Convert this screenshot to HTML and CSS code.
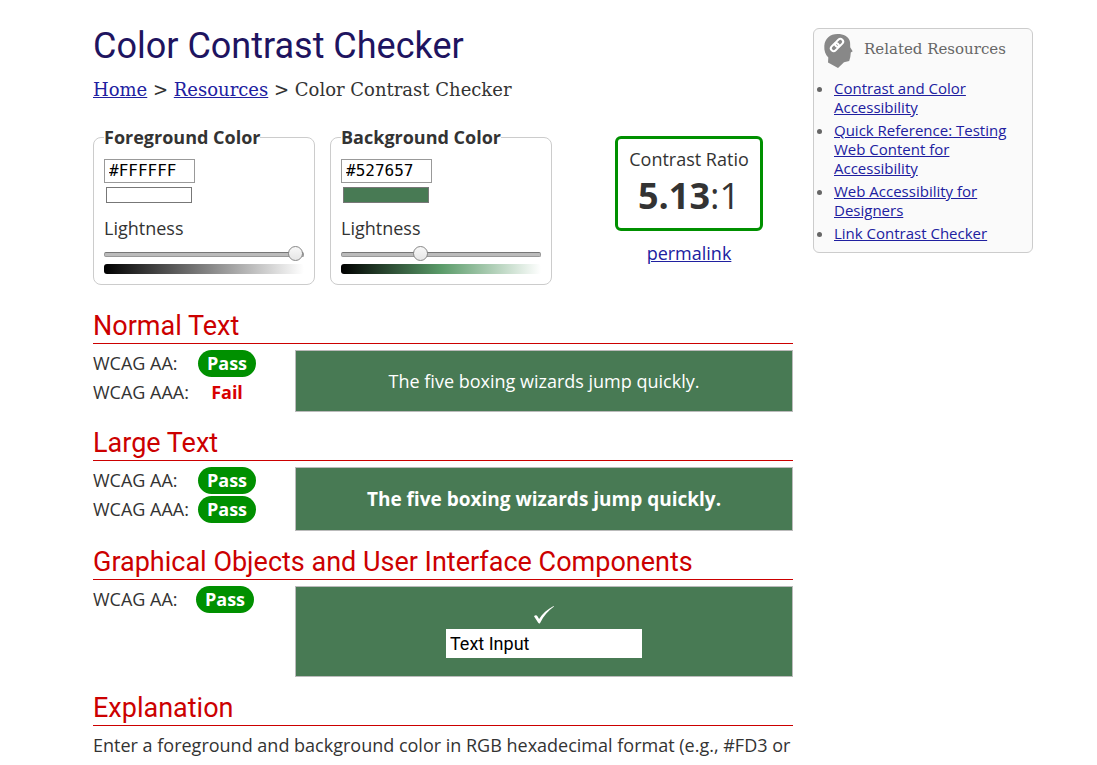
FILE: index.html
```html
<!DOCTYPE html>
<html lang="en">
<head>
<meta charset="utf-8">
<title>Color Contrast Checker</title>
<link rel="stylesheet" href="styles.css">
</head>
<body>
<div class="page">
  <main class="main">
    <h1 class="title">Color Contrast Checker</h1>
    <nav class="crumbs" aria-label="Breadcrumb"><a href="#">Home</a> &gt; <a href="#">Resources</a> &gt; Color Contrast Checker</nav>

    <form class="controls">
      <fieldset class="picker">
        <legend>Foreground Color</legend>
        <input class="hex" type="text" value="#FFFFFF" aria-label="Foreground hex value">
        <input class="swatch" type="color" value="#ffffff" aria-label="Foreground color picker">
        <label class="light-label" for="fg-light">Lightness</label>
        <input class="slider" id="fg-light" type="range" min="0" max="100" value="100">
        <div class="ramp ramp-gray"></div>
      </fieldset>
      <fieldset class="picker">
        <legend>Background Color</legend>
        <input class="hex" type="text" value="#527657" aria-label="Background hex value">
        <input class="swatch" type="color" value="#487a54" aria-label="Background color picker">
        <label class="light-label" for="bg-light">Lightness</label>
        <input class="slider" id="bg-light" type="range" min="0" max="100" value="39">
        <div class="ramp ramp-green"></div>
      </fieldset>
      <div class="result">
        <div class="ratio">
          <div class="ratio-label">Contrast Ratio</div>
          <div class="ratio-value"><b>5.13</b>:1</div>
        </div>
        <a href="#">permalink</a>
      </div>
    </form>

    <h2>Normal Text</h2>
    <section class="check">
      <div class="grades">
        <div class="grade"><span class="level">WCAG AA:</span><b class="pass">Pass</b></div>
        <div class="grade"><span class="level">WCAG AAA:</span><b class="fail">Fail</b></div>
      </div>
      <div class="sample">The five boxing wizards jump quickly.</div>
    </section>

    <h2>Large Text</h2>
    <section class="check">
      <div class="grades">
        <div class="grade"><span class="level">WCAG AA:</span><b class="pass">Pass</b></div>
        <div class="grade"><span class="level">WCAG AAA:</span><b class="pass">Pass</b></div>
      </div>
      <div class="sample sample-large">The five boxing wizards jump quickly.</div>
    </section>

    <h2>Graphical Objects and User Interface Components</h2>
    <section class="check">
      <div class="grades">
        <div class="grade"><span class="level level-narrow">WCAG AA:</span><b class="pass">Pass</b></div>
      </div>
      <div class="sample sample-ui">
        <svg class="tick" viewBox="0 0 20 18" aria-hidden="true"><path d="M0 10.2C.8 9 2.700 8.800 3.300 9.900L5.100 13C8.200 8.100 13.400 3.100 19.600 0L20 .6C14.400 4.700 9.800 9.700 6.100 16.900Q5.200 18 4.200 16.800Z"/></svg>
        <input class="demo-input" type="text" value="Text Input" aria-label="Sample input">
      </div>
    </section>

    <h2>Explanation</h2>
    <p class="explain">Enter a foreground and background color in RGB hexadecimal format (e.g., #FD3 or</p>
  </main>

  <aside class="related">
    <div class="related-head">
      <svg class="head-icon" viewBox="0 0 29 34" aria-hidden="true">
        <path class="skull" d="M13.500 0C20 0 24 2.500 25.600 6.500C26.500 9 26 11.500 26.300 13.500L28.700 17.200L26.800 18.400L26.300 23L25.200 27L20 28.300L14 34L4 28.500L4.300 23.500C1.500 20.500 0 17 .3 12C.8 4.500 6 0 13.500 0Z"/>
        <g class="chain" transform="rotate(-45 13 11)">
          <rect x="5.500" y="8.200" width="9" height="5.600" rx="2.800"/>
          <rect x="11.500" y="8.200" width="9" height="5.600" rx="2.800"/>
        </g>
      </svg>
      <h3>Related Resources</h3>
    </div>
    <ul>
      <li><a href="#">Contrast and Color Accessibility</a></li>
      <li><a href="#">Quick Reference: Testing Web Content for Accessibility</a></li>
      <li><a href="#">Web Accessibility for Designers</a></li>
      <li><a href="#">Link Contrast Checker</a></li>
    </ul>
  </aside>
</div>
</body>
</html>
```
FILE: styles.css
```css
* { box-sizing: border-box; }
body {
  margin: 0;
  background: #fff;
  color: #333;
  font: 18px/27px "Open Sans", sans-serif;
}
a { color: #2020a0; }
.page {
  display: grid;
  grid-template-columns: minmax(0, 1fr) 220px;
  gap: 20px;
  align-items: start;
  padding: 24px 64px 0 93px;
}
.title {
  margin: 0;
  color: #1e1460;
  font: 400 36px/44px Roboto, sans-serif;
}
.crumbs {
  margin-top: 10px;
  font: 18px/24px "DejaVu Serif", serif;
}
.controls {
  display: grid;
  grid-template-columns: 222px 222px minmax(0, 1fr);
  gap: 15px;
  align-items: start;
  margin-top: 22px;
}
.picker {
  min-width: 0;
  margin: 0;
  padding: 8px 10px 10px;
  border: 1px solid #ccc;
  border-radius: 8px;
}
.picker legend {
  padding: 0;
  font-weight: 700;
}
.hex {
  display: block;
  width: 91px;
  height: 24px;
  padding: 0 4px 2px;
  border: 1px solid #999;
  color: #000;
  font: 16px/20px "DejaVu Sans Mono", monospace;
}
.swatch {
  display: block;
  width: 86px;
  height: 16px;
  margin: 4px 0 0 2px;
  padding: 0;
  border: 1px solid #777;
  background: none;
}
.swatch::-webkit-color-swatch-wrapper { padding: 0; }
.swatch::-webkit-color-swatch { border: 0; border-radius: 0; }
.light-label {
  display: block;
  margin-top: 12px;
}
.slider {
  display: block;
  width: 100%;
  height: 15px;
  margin: 5px 0 2px;
  appearance: none;
  background: none;
}
.slider::-webkit-slider-runnable-track {
  height: 5px;
  border: 1px solid #999;
  border-top-color: #777;
  border-radius: 2px;
  background: #bbb;
}
.slider::-webkit-slider-thumb {
  width: 15px;
  height: 15px;
  margin-top: -7px;
  appearance: none;
  border: 1px solid #888;
  border-radius: 50%;
  background: linear-gradient(#f8f8f8, #e6e6e6);
}
.ramp {
  height: 10px;
  border-radius: 3px;
}
.ramp-gray { background: linear-gradient(90deg, #000, #fff); }
.ramp-green { background: linear-gradient(90deg, #000, #5a9b69 50%, #fff); }
.result {
  display: flex;
  flex-direction: column;
  align-items: center;
  gap: 9px;
  margin-top: 12px;
  padding-left: 18px;
}
.ratio {
  width: 148px;
  height: 95px;
  padding-top: 7px;
  border: 3px solid #009000;
  border-radius: 6px;
  text-align: center;
}
.ratio-value { font-size: 36px; line-height: 46px; }
h2 {
  margin: 14px 0 6px;
  border-bottom: 1px solid #c00;
  color: #c00;
  font: 400 27px/34px Roboto, sans-serif;
}
.controls + h2 { margin-top: 24px; }
.check {
  display: grid;
  grid-template-columns: 202px minmax(0, 1fr);
  align-items: start;
}
.grades { display: grid; gap: 2px; }
.grade { display: flex; }
.level { width: 105px; }
.level-narrow { width: 103px; }
.pass, .fail {
  width: 58px;
  border-radius: 14px;
  text-align: center;
}
.pass { background: #009000; color: #fff; }
.fail { color: #d80000; }
.sample {
  padding: 16px;
  border: 1px solid #bbb;
  background: #487a54;
  color: #fff;
  line-height: 28px;
  text-align: center;
}
.sample-large { padding: 17px 16px; font-size: 19px; font-weight: 700; }
.sample-ui {
  display: flex;
  flex-direction: column;
  align-items: center;
  gap: 5px;
  padding: 19px 16px 18px;
}
.tick { width: 20px; height: 18px; fill: #fff; }
.demo-input {
  width: 196px;
  height: 29px;
  padding: 0 4px;
  border: 0;
  background: #fff;
  color: #000;
  font: 18px/27px Roboto, sans-serif;
}
.explain { margin: 0; }
.related {
  margin-top: 4px;
  padding: 5px 10px 9px;
  border: 1px solid #ccc;
  border-radius: 6px;
  background: #fafafa;
  color: #666;
}
.related-head {
  display: flex;
  gap: 11px;
}
.head-icon { width: 29px; height: 34px; flex: none; }
.skull { fill: #888; }
.chain { fill: none; stroke: #fff; stroke-width: 2; }
.related h3 {
  margin: 3px 0 0;
  font: 400 15px/24px "DejaVu Serif", serif;
  white-space: nowrap;
}
.related ul {
  display: grid;
  gap: 4px;
  margin: 11px 0 0;
  padding-left: 10px;
  font-size: 15px;
  line-height: 19px;
}
```
